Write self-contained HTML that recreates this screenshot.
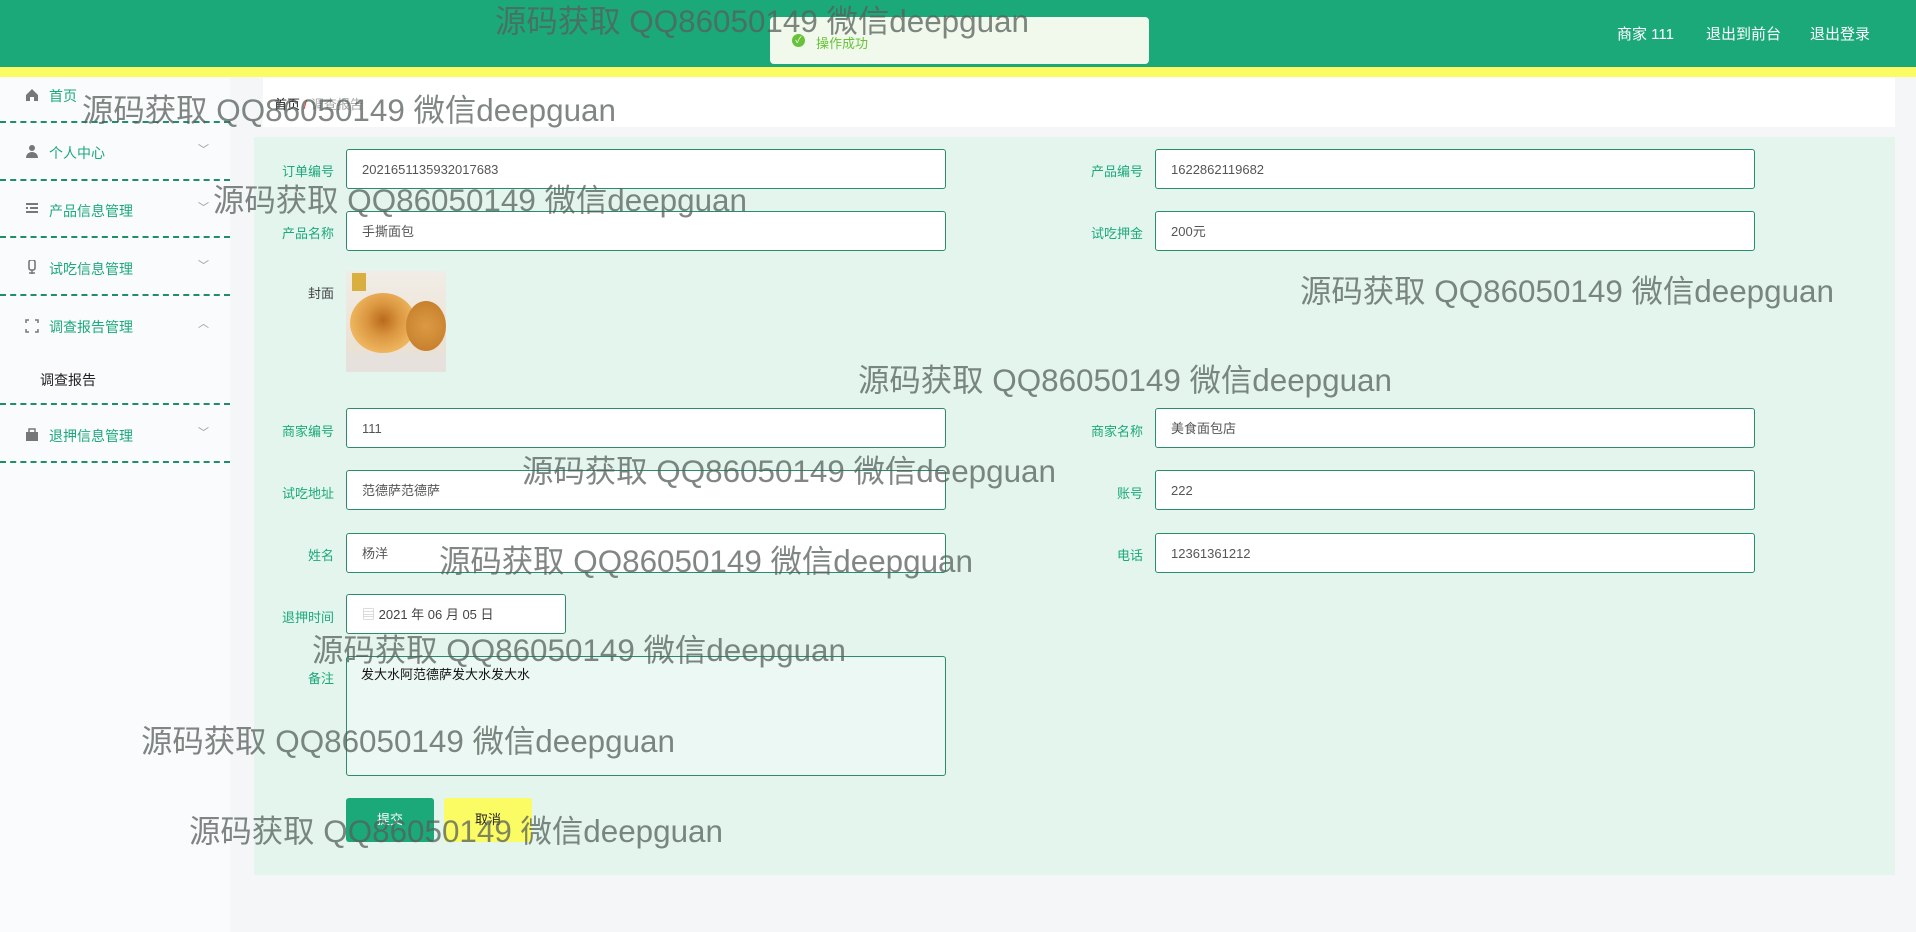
<!DOCTYPE html>
<html><head><meta charset="utf-8"><style>
*{box-sizing:border-box;margin:0;padding:0}
body{width:1916px;height:932px;position:relative;overflow:hidden;background:#f4f6f8;font-family:"Liberation Sans","Noto Sans CJK SC",sans-serif;font-size:14px}
.hdr{position:absolute;left:0;top:0;width:1916px;height:67px;background:#1ca97a}
.yl{position:absolute;left:0;top:67px;width:1916px;height:10px;background:#fbfc64}
.hl{position:absolute;top:23px;color:#fff;font-size:15px}
.side{position:absolute;left:0;top:77px;width:230px;height:855px;background:#fafbfc}
.si{position:absolute;left:49px;color:#1ca97a;font-size:14px}
.ic{position:absolute;left:25px;width:14px;height:14px;color:#888}
.ar{position:absolute;left:198px;color:#999;font-size:11px}
.dl{position:absolute;left:0;width:230px;border-top:2px dashed #1f8f66}
.bc{position:absolute;left:263px;top:77px;width:1632px;height:50px;background:#fff}
.panel{position:absolute;left:254px;top:137px;width:1641px;height:738px;background:#e4f5ee}
.lb{position:absolute;width:100px;text-align:right;color:#1ca97a;font-size:13px}
.in{position:absolute;width:600px;height:40px;background:#fff;border:1px solid #2a8c6a;border-radius:3px;padding-left:15px;line-height:40px;color:#555;font-size:13px}
.wm{position:absolute;font-size:31.4px;line-height:1;color:rgba(85,95,90,0.75);white-space:nowrap;font-family:"Liberation Sans","Noto Sans CJK SC",sans-serif}
</style></head><body>
<div class="hdr"></div><div class="yl"></div>
<div style="position:absolute;left:770px;top:17px;width:379px;height:47px;background:#f0f9eb;border-radius:4px"></div>
<div style="position:absolute;left:792px;top:34px;width:13px;height:13px;border-radius:50%;background:#67c23a;color:#fff;font-size:9px;text-align:center;line-height:13px">✓</div>
<div style="position:absolute;left:816px;top:33px;color:#67c23a;font-size:13px">操作成功</div>
<div class="hl" style="left:1617px">商家 111</div>
<div class="hl" style="left:1706px">退出到前台</div>
<div class="hl" style="left:1810px">退出登录</div>

<div class="side"></div>
<svg class="ic" style="top:88px" viewBox="0 0 14 14"><path d="M1 7L7 1l6 6v6H9V9H5v4H1z" fill="#777"/></svg>
<div class="si" style="top:86px">首页</div>
<div class="dl" style="top:121px"></div>
<svg class="ic" style="top:144px" viewBox="0 0 14 14"><circle cx="7" cy="4" r="3" fill="#777"/><path d="M1 14c0-4 3-6 6-6s6 2 6 6z" fill="#777"/></svg>
<div class="si" style="top:143px">个人中心</div><div class="ar" style="top:141px">﹀</div>
<div class="dl" style="top:179px"></div>
<svg class="ic" style="top:202px" viewBox="0 0 14 14"><path d="M1 2h12M5 6h8M1 10h12M1 6h2" stroke="#777" stroke-width="2"/></svg>
<div class="si" style="top:201px">产品信息管理</div><div class="ar" style="top:199px">﹀</div>
<div class="dl" style="top:236px"></div>
<svg class="ic" style="top:260px" viewBox="0 0 14 14"><rect x="4" y="0" width="6" height="10" rx="2" fill="none" stroke="#777" stroke-width="1.6"/><path d="M7 10v4M4 13h6" stroke="#777" stroke-width="1.5"/></svg>
<div class="si" style="top:259px">试吃信息管理</div><div class="ar" style="top:257px">﹀</div>
<div class="dl" style="top:294px"></div>
<svg class="ic" style="top:319px" viewBox="0 0 14 14"><path d="M1 4V1h3M10 1h3v3M13 10v3h-3M4 13H1v-3" fill="none" stroke="#777" stroke-width="1.5"/></svg>
<div class="si" style="top:317px">调查报告管理</div><div class="ar" style="top:315px">︿</div>
<div style="position:absolute;left:40px;top:370px;color:#222;font-size:14px">调查报告</div>
<div class="dl" style="top:403px"></div>
<svg class="ic" style="top:428px" viewBox="0 0 14 14"><rect x="1" y="4" width="12" height="9" fill="#777"/><rect x="4" y="1" width="6" height="4" fill="none" stroke="#777" stroke-width="1.5"/></svg>
<div class="si" style="top:426px">退押信息管理</div><div class="ar" style="top:424px">﹀</div>
<div class="dl" style="top:461px"></div>

<div class="bc"></div>
<div style="position:absolute;left:274px;top:94px;font-size:13px;color:#222">首页 <span style="color:#e44">/</span> <span style="color:#aaa">调查报告</span></div>

<div class="panel"></div>
<div class="lb" style="left:234px;top:161px">订单编号</div><div class="in" style="left:346px;top:149px">2021651135932017683</div>
<div class="lb" style="left:1043px;top:161px">产品编号</div><div class="in" style="left:1155px;top:149px">1622862119682</div>
<div class="lb" style="left:234px;top:223px">产品名称</div><div class="in" style="left:346px;top:211px">手撕面包</div>
<div class="lb" style="left:1043px;top:223px">试吃押金</div><div class="in" style="left:1155px;top:211px">200元</div>
<div class="lb" style="left:234px;top:283px;color:#444">封面</div>
<div style="position:absolute;left:346px;top:271px;width:100px;height:101px;background:linear-gradient(#f1ede6,#e9ded0);overflow:hidden">
<div style="position:absolute;left:4px;top:22px;width:66px;height:60px;border-radius:50%;background:radial-gradient(circle at 50% 45%,#b96a1c 0,#db9640 35%,#eeb65e 70%,#c98a3c 100%)"></div>
<div style="position:absolute;left:60px;top:30px;width:40px;height:50px;border-radius:50%;background:radial-gradient(circle,#dc9a44,#c27a28)"></div>
<div style="position:absolute;left:0;top:82px;width:100px;height:19px;background:#e6e1dc"></div>
</div>
<div style="position:absolute;left:352px;top:273px;width:14px;height:18px;background:#d9b040"></div>
<div class="lb" style="left:234px;top:421px">商家编号</div><div class="in" style="left:346px;top:408px">111</div>
<div class="lb" style="left:1043px;top:421px">商家名称</div><div class="in" style="left:1155px;top:408px">美食面包店</div>
<div class="lb" style="left:234px;top:483px">试吃地址</div><div class="in" style="left:346px;top:470px">范德萨范德萨</div>
<div class="lb" style="left:1043px;top:483px">账号</div><div class="in" style="left:1155px;top:470px">222</div>
<div class="lb" style="left:234px;top:545px">姓名</div><div class="in" style="left:346px;top:533px">杨洋</div>
<div class="lb" style="left:1043px;top:545px">电话</div><div class="in" style="left:1155px;top:533px">12361361212</div>
<div class="lb" style="left:234px;top:607px">退押时间</div><div class="in" style="left:346px;top:594px;width:220px;color:#444"><span style="color:#bbb">▤</span> 2021 年 06 月 05 日</div>
<div class="lb" style="left:234px;top:668px">备注</div>
<div style="position:absolute;left:346px;top:656px;width:600px;height:120px;background:#ecf8f3;border:1px solid #2a8c6a;border-radius:3px;padding:7px 14px;color:#111;font-size:13px">发大水阿范德萨发大水发大水</div>
<div style="position:absolute;left:346px;top:798px;width:88px;height:44px;background:#1ca97a;border-radius:3px;color:#fff;text-align:center;line-height:44px;font-size:13px">提交</div>
<div style="position:absolute;left:444px;top:798px;width:88px;height:44px;background:#fbfc64;border-radius:3px;color:#222;text-align:center;line-height:44px;font-size:13px">取消</div>

<div class="wm" style="left:495px;top:6px">源码获取 QQ86050149 微信deepguan</div>
<div class="wm" style="left:82px;top:95px">源码获取 QQ86050149 微信deepguan</div>
<div class="wm" style="left:213px;top:185px">源码获取 QQ86050149 微信deepguan</div>
<div class="wm" style="left:1300px;top:276px">源码获取 QQ86050149 微信deepguan</div>
<div class="wm" style="left:858px;top:365px">源码获取 QQ86050149 微信deepguan</div>
<div class="wm" style="left:522px;top:456px">源码获取 QQ86050149 微信deepguan</div>
<div class="wm" style="left:439px;top:546px">源码获取 QQ86050149 微信deepguan</div>
<div class="wm" style="left:312px;top:635px">源码获取 QQ86050149 微信deepguan</div>
<div class="wm" style="left:141px;top:726px">源码获取 QQ86050149 微信deepguan</div>
<div class="wm" style="left:189px;top:816px">源码获取 QQ86050149 微信deepguan</div>
</body></html>
